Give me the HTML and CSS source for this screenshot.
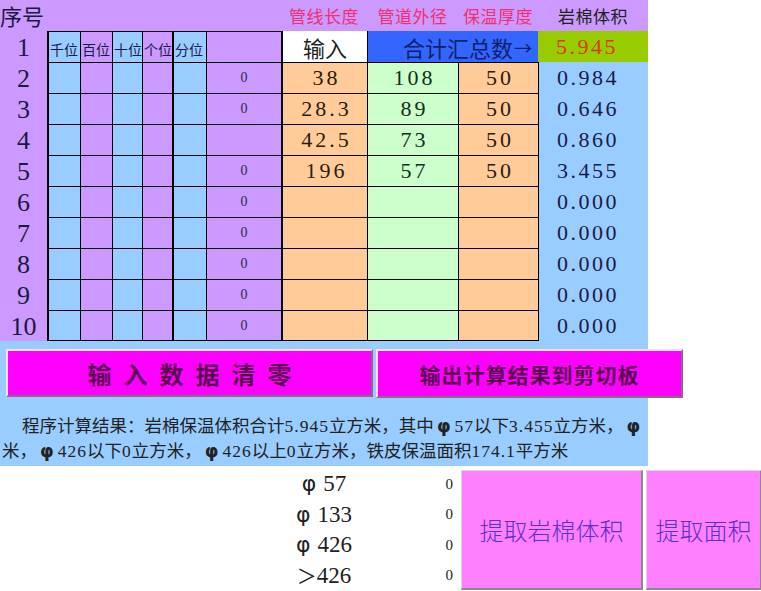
FILE: index.html
```html
<!DOCTYPE html>
<html lang="zh">
<head>
<meta charset="utf-8">
<title>岩棉保温体积计算</title>
<link rel="stylesheet" href="styles.css">
</head>
<body>
<div class="panel">
  <div class="grid">
    <div class="h xh">序号</div>
    <div class="h sp6"></div>
    <div class="h red">管线长度</div>
    <div class="h red">管道外径</div>
    <div class="h red">保温厚度</div>
    <div class="h blk">岩棉体积</div>

    <div class="n">1</div>
    <div class="c b k lab">千位</div>
    <div class="c p lab">百位</div>
    <div class="c b lab">十位</div>
    <div class="c p lab">个位</div>
    <div class="c b k lab">分位</div>
    <div class="c p"></div>
    <div class="c w k nt big">输入</div>
    <div class="c sum nt big">合计汇总数<span class="arrow">→</span></div>
    <div class="tot">5.945</div>

    <div class="n">2</div>
    <div class="c b k"></div><div class="c p"></div><div class="c b"></div><div class="c p"></div><div class="c b k"></div>
    <div class="c p z">0</div>
    <div class="c o k v">38</div><div class="c g v">108</div><div class="c o v">50</div>
    <div class="r">0.984</div>

    <div class="n">3</div>
    <div class="c b k"></div><div class="c p"></div><div class="c b"></div><div class="c p"></div><div class="c b k"></div>
    <div class="c p z">0</div>
    <div class="c o k v">28.3</div><div class="c g v">89</div><div class="c o v">50</div>
    <div class="r">0.646</div>

    <div class="n">4</div>
    <div class="c b k"></div><div class="c p"></div><div class="c b"></div><div class="c p"></div><div class="c b k"></div>
    <div class="c p z"></div>
    <div class="c o k v">42.5</div><div class="c g v">73</div><div class="c o v">50</div>
    <div class="r">0.860</div>

    <div class="n">5</div>
    <div class="c b k"></div><div class="c p"></div><div class="c b"></div><div class="c p"></div><div class="c b k"></div>
    <div class="c p z">0</div>
    <div class="c o k v">196</div><div class="c g v">57</div><div class="c o v">50</div>
    <div class="r">3.455</div>

    <div class="n">6</div>
    <div class="c b k"></div><div class="c p"></div><div class="c b"></div><div class="c p"></div><div class="c b k"></div>
    <div class="c p z">0</div>
    <div class="c o k v"></div><div class="c g v"></div><div class="c o v"></div>
    <div class="r">0.000</div>

    <div class="n">7</div>
    <div class="c b k"></div><div class="c p"></div><div class="c b"></div><div class="c p"></div><div class="c b k"></div>
    <div class="c p z">0</div>
    <div class="c o k v"></div><div class="c g v"></div><div class="c o v"></div>
    <div class="r">0.000</div>

    <div class="n">8</div>
    <div class="c b k"></div><div class="c p"></div><div class="c b"></div><div class="c p"></div><div class="c b k"></div>
    <div class="c p z">0</div>
    <div class="c o k v"></div><div class="c g v"></div><div class="c o v"></div>
    <div class="r">0.000</div>

    <div class="n">9</div>
    <div class="c b k"></div><div class="c p"></div><div class="c b"></div><div class="c p"></div><div class="c b k"></div>
    <div class="c p z">0</div>
    <div class="c o k v"></div><div class="c g v"></div><div class="c o v"></div>
    <div class="r">0.000</div>

    <div class="n">10</div>
    <div class="c b k l"></div><div class="c p l"></div><div class="c b l"></div><div class="c p l"></div><div class="c b k l"></div>
    <div class="c p z l">0</div>
    <div class="c o k v l"></div><div class="c g v l"></div><div class="c o v l"></div>
    <div class="r">0.000</div>
  </div>

  <div class="btns">
    <button class="mbtn clear">输入数据清零</button>
    <button class="mbtn copy">输出计算结果到剪切板</button>
  </div>

  <div class="result">
    <div class="line1">程序计算结果：岩棉保温体积合计<span class="num">5.945</span>立方米，其中<span class="phi">φ</span><span class="num">57</span>以下<span class="num">3.455</span>立方米，<span class="phi">φ</span></div>
    <div class="line2">米，<span class="phi">φ</span><span class="num">426</span>以下<span class="num">0</span>立方米，<span class="phi">φ</span><span class="num">426</span>以上<span class="num">0</span>立方米，铁皮保温面积<span class="num">174.1</span>平方米</div>
  </div>
</div>

<div class="bottom">
  <div class="labels">
    <div class="lr"><span class="phi2">φ</span>57</div>
    <div class="lr"><span class="phi2">φ</span>133</div>
    <div class="lr"><span class="phi2">φ</span>426</div>
    <div class="lr"><span class="gt">＞</span>426</div>
  </div>
  <div class="zeros">
    <div class="zr">0</div>
    <div class="zr">0</div>
    <div class="zr">0</div>
    <div class="zr">0</div>
  </div>
  <button class="pbtn wide">提取岩棉体积</button>
  <button class="pbtn narrow">提取面积</button>
</div>
</body>
</html>
```

FILE: styles.css
```css
* { box-sizing: border-box; }
body {
  margin: 0;
  background: #ffffff;
  font-family: "Noto Sans CJK SC", sans-serif;
  color: #222;
  overflow: hidden;
}
.panel {
  width: 648px;
  height: 466px;
  background: #99ccff;
}
.grid {
  display: grid;
  grid-template-columns: 47px 33px 32px 30px 30px 34px 75px 86px 91px 80px 110px;
  grid-template-rows: repeat(11, 31px);
}
.h {
  background: #cc99ff;
  display: flex;
  align-items: center;
  justify-content: center;
  font-size: 17px;
  letter-spacing: 0.5px;
  white-space: nowrap;
}
.xh {
  justify-content: flex-start;
  font-size: 22px;
  letter-spacing: 0;
  color: #1a1a40;
  padding-bottom: 1px;
}
.sp6 { grid-column: span 6; }
.red { color: #f0306e; }
.blk { color: #222; }

.n {
  background: #cc99ff;
  display: flex;
  align-items: center;
  justify-content: center;
  font-family: "Liberation Serif", serif;
  font-size: 26px;
  color: #1a1a40;
  padding-top: 2px;
}
.c {
  border-top: 1px solid #000;
  border-left: 1px solid #000;
  display: flex;
  align-items: center;
  justify-content: center;
  white-space: nowrap;
}
.k { border-left-width: 2px; }
.l { border-bottom: 1px solid #000; }
.nt { border-top: none; }
.b { background: #99ccff; }
.p { background: #cc99ff; }
.o { background: #ffcc99; }
.g { background: #ccffcc; }
.w { background: #ffffff; }
.lab {
  justify-content: flex-start;
  font-size: 14px;
  padding-left: 1px;
  padding-top: 4px;
  color: #1a1a50;
  overflow: visible;
}
.big {
  font-size: 22px;
  color: #222;
}
.sum {
  grid-column: span 2;
  background: #3366ff;
  color: #10206a;
  justify-content: flex-end;
  padding-right: 6px;
}
.arrow {
  font-size: 18px;
  margin-left: 1px;
}
.tot {
  background: #99cc00;
  color: #d63a00;
  display: flex;
  align-items: center;
  font-family: "Liberation Serif", serif;
  font-size: 22px;
  letter-spacing: 2.5px;
  padding-left: 18px;
}
.z {
  font-family: "Liberation Serif", serif;
  font-size: 14px;
  color: #2a2a50;
}
.v {
  font-family: "Liberation Serif", serif;
  font-size: 22px;
  letter-spacing: 3px;
  padding-left: 3px;
  color: #2a1a10;
}
.g.v { color: #10301a; }
.r {
  border-left: 1px solid #000;
  display: flex;
  align-items: center;
  font-family: "Liberation Serif", serif;
  font-size: 22px;
  letter-spacing: 2.5px;
  padding-left: 18px;
  color: #1a1a4d;
}

.btns {
  display: flex;
  gap: 3px;
  padding: 8px 0 0 6px;
}
.mbtn {
  background: #ff00ff;
  border-top: 2px solid #ffe0ff;
  border-left: 2px solid #ffe0ff;
  border-right: 2px solid #8a6a8a;
  border-bottom: 2px solid #8a6a8a;
  font-family: "Noto Sans CJK SC", sans-serif;
  font-weight: bold;
  color: #5a0a50;
  padding: 0;
  margin: 0;
  flex: none;
}
.clear {
  width: 367px;
  height: 48px;
  font-size: 24px;
  letter-spacing: 12px;
  padding-left: 12px;
}
.copy {
  width: 307px;
  height: 49px;
  font-size: 21px;
  letter-spacing: 1px;
}

.result {
  margin-top: 15px;
  font-family: "Noto Sans CJK SC", sans-serif;
  font-size: 17.5px;
  line-height: 23px;
  color: #222;
  white-space: nowrap;
  overflow: hidden;
}
.num {
  font-family: "Liberation Serif", serif;
  letter-spacing: 1px;
}
.line1 { padding-left: 22px; }
.line2 { padding-left: 2px; }
.phi {
  font-family: "DejaVu Sans", sans-serif;
  font-weight: bold;
  margin: 0 4px 0 3px;
}

.bottom {
  display: flex;
  padding-top: 3px;
  align-items: flex-start;
}
.labels {
  margin-left: 281px;
  width: 86px;
  flex: none;
}
.lr {
  height: 30.5px;
  display: flex;
  align-items: center;
  justify-content: center;
  font-family: "Liberation Serif", serif;
  font-size: 23px;
  line-height: 26px;
  color: #222;
}
.phi2 {
  font-family: "DejaVu Sans", sans-serif;
  font-size: 22px;
  margin-right: 7px;
}
.gt {
  font-family: "Noto Sans CJK SC", sans-serif;
  font-size: 20px;
}
.zeros {
  width: 94px;
  flex: none;
}
.zr {
  height: 30.5px;
  display: flex;
  align-items: center;
  justify-content: flex-end;
  padding-right: 8px;
  font-family: "Liberation Serif", serif;
  font-size: 15px;
  color: #222;
}
.pbtn {
  background: #ff80ff;
  border-top: 1px solid #d8d8d8;
  border-left: 1px solid #d8d8d8;
  border-right: 2px solid #8a8a8a;
  border-bottom: 2px solid #8a8a8a;
  height: 120px;
  margin-top: 1px;
  font-family: "Noto Sans CJK SC", sans-serif;
  font-size: 24px;
  font-weight: 300;
  color: #5a30d0;
  padding: 0;
  flex: none;
}
.wide { width: 182px; }
.narrow { width: 116px; margin-left: 3px; }
```
